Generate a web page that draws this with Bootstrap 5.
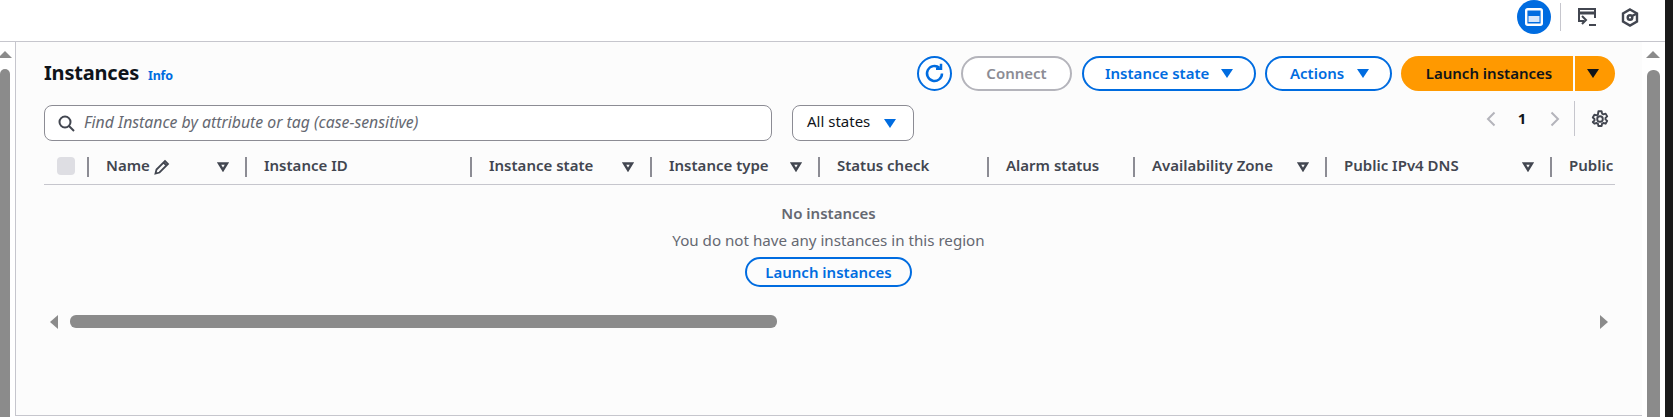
<!DOCTYPE html>
<html lang="en">
<head>
<meta charset="utf-8">
<title>Instances</title>
<link href="https://cdn.jsdelivr.net/npm/bootstrap@5.3.0/dist/css/bootstrap.min.css" rel="stylesheet">
<style>
html,body{height:417px;overflow:hidden;background:#fff}
body{font-family:"Noto Sans",sans-serif;font-size:15px;color:#0f141a}
.shell{width:1665px;height:417px}
.blackstrip{width:8px;height:417px;background:#1a1a1a;flex:none}
.topstrip{height:41px;padding-right:26px;padding-bottom:7px}
.winbtn{width:34px;height:34px;border-radius:50%;background:#006ce0}
.topsep{width:1px;height:28px;background:#c6c6cd;margin:0 16px 0 9px}
.iconone{margin-right:24px}
.mainrow{height:376px}
.vleft{width:15px;background:#fff;border-top:1px solid #c6c6cd}
.vright{width:23px;background:#fff;border-top:1px solid #c6c6cd;padding-left:5px}
.arrowup{width:0;height:0;border-left:7px solid transparent;border-right:7px solid transparent;border-bottom:7px solid #8b8b8b}
.vthumb{background:#8b8b8b;border-radius:6px 6px 0 0;flex:1}
.vleft .arrowup{margin:9px 0 0 -2px}
.vleft .vthumb{width:10px;margin-top:11px}
.vright .arrowup{margin:9px 0 0 -1px}
.vright .vthumb{width:13px;margin-top:12px}
.panel{flex:1;background:#fcfcfc;border:solid #c6c6cd;border-width:1px 0 1px 1px;padding:0 27px 0 28px;height:375px}
.headrow{height:63px;padding-top:14px}
.pagetitle{font-size:20px;font-weight:700;line-height:33px;letter-spacing:-.2px}
.infolink{font-size:12.500px;font-weight:700;color:#006ce0;text-decoration:none;margin-left:9px}
.btnset{gap:9px}
.pillbtn{height:35px;border-radius:18px;border:2px solid #006ce0;background:#fff;color:#006ce0;font-weight:600;font-size:15px;padding:0 21px;display:inline-flex;align-items:center;line-height:1}
.refreshbtn{width:35px;padding:0;justify-content:center}
.connectbtn{width:111px;justify-content:center;border-color:#b4b4bb;color:#8c8c94;margin-right:1px;padding:0}
.statebtn{width:174px;justify-content:space-between}
.actbtn{width:127px;justify-content:space-between;padding-left:23px}
.tri{width:0;height:0;border-left:6px solid transparent;border-right:6px solid transparent;border-top:9px solid #006ce0;display:block}
.launchgroup{display:flex}
.launchmain{width:172px;height:35px;background:#ff9900;color:#0f141a;border:0;border-radius:18px 0 0 18px;font-weight:600;font-size:15px;padding:0 0 0 4px}
.launchdrop{width:40px;height:35px;background:#ff9900;border:0;border-radius:0 18px 18px 0;margin-left:2px;padding:0 0 0 12px}
.launchdrop .tri{border-top-color:#0f141a}
.filterrow{height:36px}
.searchbox{width:728px;height:36px;border:1px solid #8c8c94;border-radius:8px;background:#fff;padding:0 12px 0 13px;gap:9px}
.searchtext{font-style:italic;font-size:15.800px;color:#656871;white-space:nowrap}
.statesel{width:122px;height:36px;margin-left:20px;border:1px solid #8c8c94;border-radius:8px;background:#fff;padding:0 17px 0 14px;justify-content:space-between}
.statelabel{margin-bottom:3px}
.pager{margin-left:auto;height:35px;margin-top:-4px;margin-right:6px}
.pagenum{font-weight:700;width:16px;text-align:center;margin:0 20px 0 18px}
.pagesep{width:1px;height:35px;background:#c6c6cd;margin:0 16px 0 14px}
.gridhead{display:grid;grid-template-columns:43px 158px 225px 180px 168px 169px 146px 192px 225px 65px;height:44px;border-bottom:1px solid #c6c6cd;overflow:hidden;padding-top:14px;color:#424650;font-weight:600}
.hcell{display:flex;align-items:flex-start;height:24px;line-height:21px;white-space:nowrap;overflow:hidden;padding-left:19px;padding-right:16px;position:relative}
.hcell::before{content:"";position:absolute;left:0;top:2px;width:2px;height:20px;background:#8c8c94}
.cbcell{padding:2px 0 0 13px;display:block}
.fakecheck{width:18px;height:18px;border-radius:4px;background:#dedee3;display:block}
.sorttri{margin-left:auto;margin-top:7px}
.emptystate{text-align:center;color:#656871;padding:17px 2px 0 0}
.emptytitle{font-weight:600;line-height:22px}
.emptytext{line-height:22px;margin-top:5px;font-size:15.150px}
.emptybtn{width:167px;height:30px;justify-content:center;margin-top:6px;background:transparent;padding:0}
.hscroll{margin-top:28px;height:13px;padding-left:6px}
.arrowleft{width:0;height:0;border-top:7px solid transparent;border-bottom:7px solid transparent;border-right:8px solid #8b8b8b}
.arrowright{width:0;height:0;border-top:7px solid transparent;border-bottom:7px solid transparent;border-left:8px solid #8b8b8b;margin-left:auto;margin-right:7px}
.hthumb{width:707px;height:13px;background:#8b8b8b;border-radius:6px;margin-left:12px}
</style>
</head>
<body>
<div class="d-flex">
<div class="shell d-flex flex-column">
  <div class="topstrip d-flex align-items-center justify-content-end">
    <button class="winbtn border-0 d-flex align-items-center justify-content-center p-0" aria-label="Window">
      <svg width="18" height="18" viewBox="0 0 18 18"><rect x="1.200" y="1.200" width="15.600" height="15.600" rx="1.500" fill="none" stroke="#fff" stroke-width="2.400"/><rect x="3.500" y="8" width="11" height="6" fill="#d5e6fb"/></svg>
    </button>
    <span class="topsep"></span>
    <svg class="iconone" width="20" height="20" viewBox="0 0 20 20" fill="none" stroke="#424650" stroke-width="2"><path d="M7 14H2V2h16v9"/><path d="M2 6h16" stroke-width="3"/><path d="M5 9l4 4-4 4M12 18h7"/></svg>
    <svg width="18" height="19" viewBox="0 0 18 19" fill="none" stroke="#424650" stroke-width="2.400"><path d="M9 1.500l7 4v8l-7 4-7-4v-8z"/><circle cx="9" cy="9.500" r="2.300"/><path d="M11 8l5-2.500"/></svg>
  </div>
  <div class="mainrow d-flex">
    <div class="vleft d-flex flex-column"><span class="arrowup"></span><span class="vthumb"></span></div>
    <main class="panel">
      <div class="headrow d-flex align-items-start">
        <div class="pagetitle">Instances<a class="infolink" href="#">Info</a></div>
        <div class="btnset ms-auto d-flex">
          <button class="pillbtn refreshbtn" aria-label="Refresh">
            <svg width="23" height="23" viewBox="0 0 23 23" fill="none" stroke="#006ce0" stroke-width="2.500"><path d="M19 11.500a7.500 7.500 0 1 1-2.600-5.700"/><path d="M18 1.800v5h-5"/></svg>
          </button>
          <button class="pillbtn connectbtn" disabled>Connect</button>
          <button class="pillbtn statebtn">Instance state<span class="tri"></span></button>
          <button class="pillbtn actbtn">Actions<span class="tri"></span></button>
          <div class="launchgroup">
            <button class="launchmain">Launch instances</button>
            <button class="launchdrop" aria-label="More"><span class="tri"></span></button>
          </div>
        </div>
      </div>
      <div class="filterrow d-flex">
        <div class="searchbox d-flex align-items-center">
          <svg width="17" height="17" viewBox="0 0 17 17" fill="none" stroke="#424650" stroke-width="2"><circle cx="7" cy="7" r="5.500"/><path d="M11 11l5 5"/></svg>
          <span class="searchtext">Find Instance by attribute or tag (case-sensitive)</span>
        </div>
        <div class="statesel d-flex align-items-center"><span class="statelabel">All states</span><span class="tri"></span></div>
        <div class="pager d-flex align-items-center">
          <svg width="10" height="16" viewBox="0 0 10 16" fill="none" stroke="#b4b4bb" stroke-width="2"><path d="M8.500 1.500L2 8l6.500 6.500"/></svg>
          <span class="pagenum">1</span>
          <svg width="10" height="16" viewBox="0 0 10 16" fill="none" stroke="#b4b4bb" stroke-width="2"><path d="M1.500 1.500L8 8l-6.500 6.500"/></svg>
          <span class="pagesep"></span>
          <svg width="18" height="18" viewBox="0 0 18 18" fill="none" stroke="#424650" stroke-width="1.900" stroke-linejoin="round"><circle cx="9" cy="9" r="2.800"/><path d="M7.400 1.300h3.200l.5 2.300 1.300.7 2.200-.7 1.600 2.800-1.700 1.500v1.500l1.700 1.500-1.600 2.800-2.200-.7-1.300.7-.5 2.300H7.400l-.5-2.300-1.300-.7-2.200.7L1.800 12l1.700-1.500V9L1.800 7.500l1.600-2.800 2.200.7 1.300-.7z"/></svg>
        </div>
      </div>
      <div class="gridhead">
        <div class="cbcell"><span class="fakecheck"></span></div>
        <div class="hcell">Name
          <svg class="ms-1 mt-1" width="16" height="16" viewBox="0 0 16 16" fill="none" stroke="#424650" stroke-width="1.800"><path d="M1.500 14.500l1-4 8.500-8.500 3 3-8.500 8.500zM9.500 3.500l3 3"/></svg>
          <svg class="sorttri" width="12" height="10" viewBox="0 0 12 10" fill="none" stroke="#424650" stroke-width="2.400"><path d="M2 1.500h8L6 8z"/></svg></div>
        <div class="hcell">Instance ID</div>
        <div class="hcell">Instance state<svg class="sorttri" width="12" height="10" viewBox="0 0 12 10" fill="none" stroke="#424650" stroke-width="2.400"><path d="M2 1.500h8L6 8z"/></svg></div>
        <div class="hcell">Instance type<svg class="sorttri" width="12" height="10" viewBox="0 0 12 10" fill="none" stroke="#424650" stroke-width="2.400"><path d="M2 1.500h8L6 8z"/></svg></div>
        <div class="hcell">Status check</div>
        <div class="hcell">Alarm status</div>
        <div class="hcell">Availability Zone<svg class="sorttri" width="12" height="10" viewBox="0 0 12 10" fill="none" stroke="#424650" stroke-width="2.400"><path d="M2 1.500h8L6 8z"/></svg></div>
        <div class="hcell">Public IPv4 DNS<svg class="sorttri" width="12" height="10" viewBox="0 0 12 10" fill="none" stroke="#424650" stroke-width="2.400"><path d="M2 1.500h8L6 8z"/></svg></div>
        <div class="hcell">Public</div>
      </div>
      <div class="emptystate">
        <div class="emptytitle">No instances</div>
        <div class="emptytext">You do not have any instances in this region</div>
        <button class="pillbtn emptybtn">Launch instances</button>
      </div>
      <div class="hscroll d-flex align-items-center"><span class="arrowleft"></span><span class="hthumb"></span><span class="arrowright"></span></div>
    </main>
    <div class="vright d-flex flex-column"><span class="arrowup"></span><span class="vthumb"></span></div>
  </div>
</div>
<div class="blackstrip"></div>
</div>
</body>
</html>
